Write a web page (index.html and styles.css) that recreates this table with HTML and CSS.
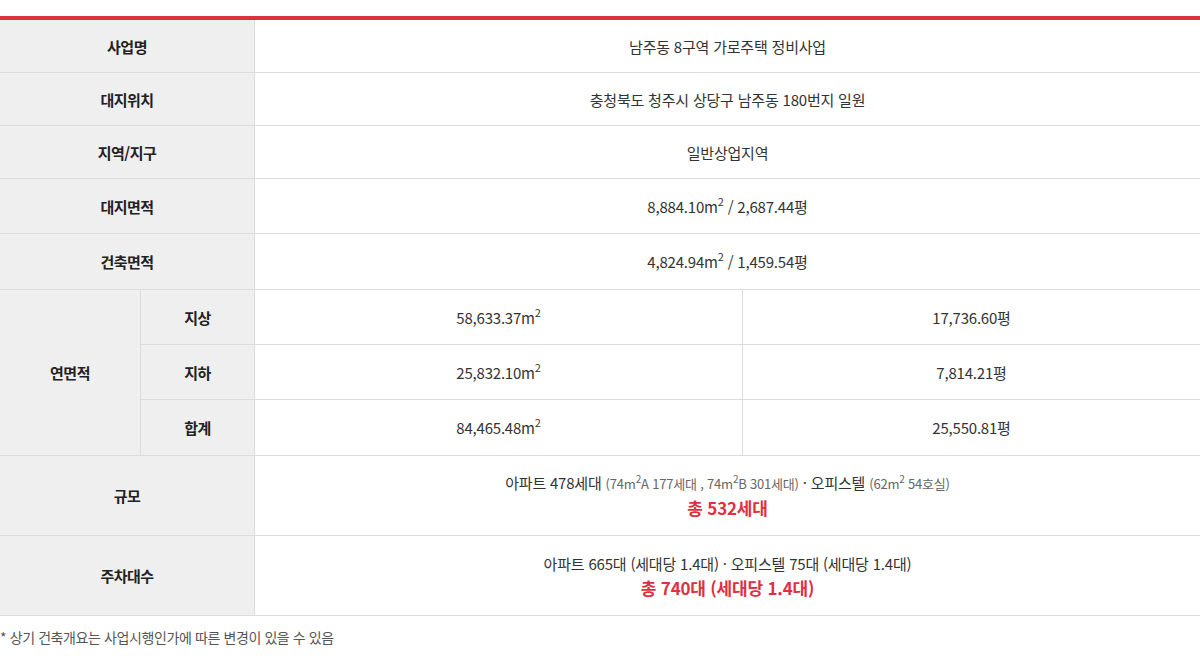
FILE: index.html
```html
<!DOCTYPE html>
<html lang="ko">
<head>
<meta charset="utf-8">
<link rel="stylesheet" href="styles.css">
</head>
<body>
<div class="wrap">
  <table class="spec">
    <colgroup>
      <col class="c1"><col class="c2"><col class="c3"><col class="c4">
    </colgroup>
    <tbody>
      <tr class="h52">
        <th colspan="2">사업명</th>
        <td colspan="2">남주동 8구역 가로주택 정비사업</td>
      </tr>
      <tr class="h52">
        <th colspan="2">대지위치</th>
        <td colspan="2">충청북도 청주시 상당구 남주동 180번지 일원</td>
      </tr>
      <tr class="h52">
        <th colspan="2">지역/지구</th>
        <td colspan="2">일반상업지역</td>
      </tr>
      <tr class="h54">
        <th colspan="2">대지면적</th>
        <td colspan="2">8,884.10m<sup>2</sup> / 2,687.44평</td>
      </tr>
      <tr class="h55">
        <th colspan="2">건축면적</th>
        <td colspan="2">4,824.94m<sup>2</sup> / 1,459.54평</td>
      </tr>
      <tr class="h54">
        <th rowspan="3" class="grp">연면적</th>
        <th>지상</th>
        <td class="split">58,633.37m<sup>2</sup></td>
        <td>17,736.60평</td>
      </tr>
      <tr class="h54">
        <th>지하</th>
        <td class="split">25,832.10m<sup>2</sup></td>
        <td>7,814.21평</td>
      </tr>
      <tr class="h55">
        <th>합계</th>
        <td class="split">84,465.48m<sup>2</sup></td>
        <td>25,550.81평</td>
      </tr>
      <tr class="h79">
        <th colspan="2">규모</th>
        <td colspan="2">
          <div class="line">아파트 478세대 <span class="sub">(74m<sup>2</sup>A 177세대 , 74m<sup>2</sup>B 301세대)</span> · 오피스텔 <span class="sub">(62m<sup>2</sup> 54호실)</span></div>
          <div class="total">총 532세대</div>
        </td>
      </tr>
      <tr class="h79">
        <th colspan="2">주차대수</th>
        <td colspan="2">
          <div class="line">아파트 665대 (세대당 1.4대) · 오피스텔 75대 (세대당 1.4대)</div>
          <div class="total">총 740대 (세대당 1.4대)</div>
        </td>
      </tr>
    </tbody>
  </table>
  <p class="note">* 상기 건축개요는 사업시행인가에 따른 변경이 있을 수 있음</p>
</div>
</body>
</html>
```

FILE: styles.css
```css
html, body {
  margin: 0;
  padding: 0;
  background: #fff;
}
body {
  font-family: "Noto Sans CJK KR", "Noto Sans", sans-serif;
  color: #333;
}
.wrap {
  padding-top: 16px;
}
.spec {
  width: 1200px;
  border-collapse: separate;
  border-spacing: 0;
  border-top: 4px solid #dc323f;
  table-layout: fixed;
}
.c1 { width: 141px; }
.c2 { width: 114px; }
.c3 { width: 488px; }
.c4 { width: 457px; }
.spec th,
.spec td {
  padding: 0;
  text-align: center;
  vertical-align: middle;
  border-bottom: 1px solid #dcdcdc;
  font-size: 15px;
  letter-spacing: -0.2px;
}
.spec th {
  background: #efefef;
  font-weight: 700;
  color: #222;
  border-right: 1px solid #dcdcdc;
  letter-spacing: -0.5px;
}
.spec td {
  color: #333;
  font-weight: 400;
}
.spec td.split {
  border-right: 1px solid #dcdcdc;
}
.h52 th, .h52 td { height: 52px; }
.h54 th, .h54 td { height: 54px; }
.h55 th, .h55 td { height: 55px; }
.h79 th, .h79 td { height: 79px; }
sup {
  font-size: 11px;
  line-height: 0;
  vertical-align: 7px;
}
.line {
  line-height: 24px;
}
.sub {
  font-size: 13px;
  color: #666;
}
.sub sup {
  font-size: 10px;
  vertical-align: 6px;
}
.total {
  color: #e0303f;
  font-weight: 700;
  font-size: 17px;
  line-height: 24px;
}
.note {
  margin: 11px 0 0;
  font-size: 14px;
  color: #555;
  letter-spacing: -0.4px;
}
```
